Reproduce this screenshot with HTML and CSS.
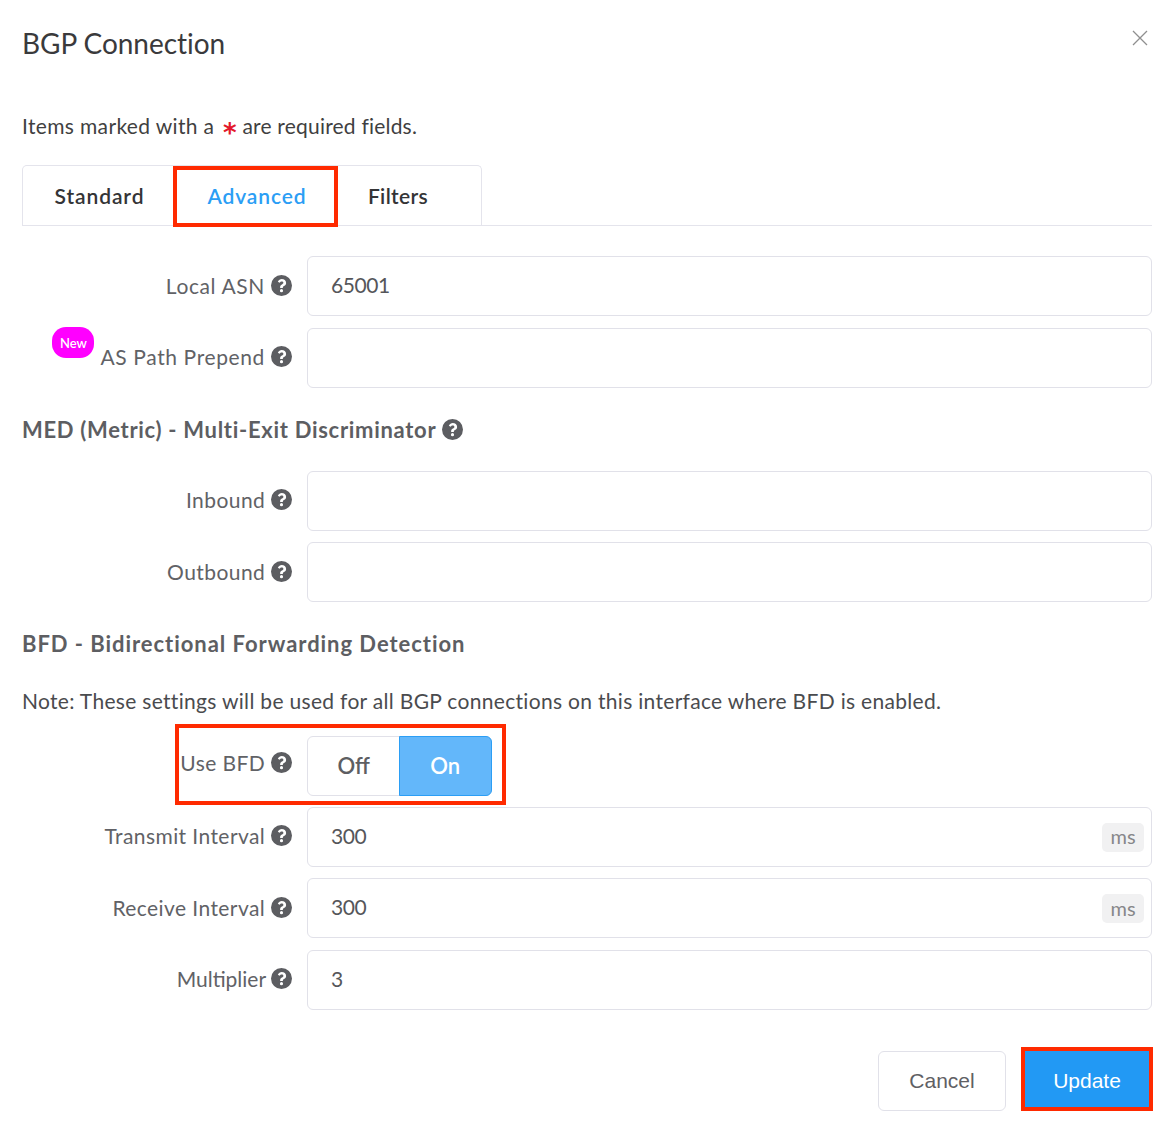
FILE: index.html
```html
<!DOCTYPE html>
<html lang="en">
<head>
<meta charset="utf-8">
<title>BGP Connection</title>
<link rel="stylesheet" href="styles.css">
</head>
<body>
<svg width="0" height="0" class="defs"><defs>
<symbol id="help" viewBox="0 0 20 20">
<path fill="currentColor" fill-rule="evenodd" d="M10 0a10 10 0 1 0 0 20a10 10 0 0 0 0-20zM10.2 3.9c2.3 0 4.2 1.5 4.2 3.6c0 1.6-.9 2.3-2 3c-.8.5-1.1.8-1.1 1.4v.4H8.7v-.6c0-1.4.7-2.1 1.7-2.7c.9-.5 1.4-.9 1.4-1.5c0-.8-.8-1.3-1.6-1.3c-.9 0-1.4.4-2 1.2L6.500 6.500c1-1.700 2.100-2.600 3.700-2.600zM10 13.400a1.500 1.500 0 1 1 0 3a1.500 1.500 0 0 1 0-3z"/>
</symbol></defs></svg>
<main class="dialog">
  <header class="head">
    <h1>BGP Connection</h1>
    <svg class="close" viewBox="0 0 16 16" width="16" height="16"><path d="M1 1l14 14M15 1L1 15" stroke="#8f8f8f" stroke-width="1.300" fill="none"/></svg>
  </header>
  <p class="req">Items marked with a <span class="star">*</span> <span class="tail">are required fields.</span></p>
  <div class="tabs-line">
    <nav class="tabs">
      <span class="tab">Standard</span>
      <span class="tab active">Advanced<i class="mark"></i></span>
      <span class="tab">Filters</span>
    </nav>
  </div>
  <div class="row first"><label class="wide">Local ASN <svg class="q"><use href="#help"/></svg></label><div class="input">65001</div></div>
  <div class="row"><label class="wide"><span class="new">New</span>AS Path Prepend <svg class="q"><use href="#help"/></svg></label><div class="input"></div></div>
  <h2 class="sect med">MED (Metric) - Multi-Exit Discriminator <svg class="q"><use href="#help"/></svg></h2>
  <div class="row"><label>Inbound <svg class="q"><use href="#help"/></svg></label><div class="input"></div></div>
  <div class="row"><label>Outbound <svg class="q"><use href="#help"/></svg></label><div class="input"></div></div>
  <h2 class="sect bfd">BFD - Bidirectional Forwarding Detection</h2>
  <p class="note">Note: These settings will be used for all BGP connections on this interface where BFD is enabled.</p>
  <div class="row use"><label class="uselabel">Use BFD <svg class="q"><use href="#help"/></svg></label>
    <div class="toggle"><span class="off">Off</span><span class="on">On</span></div><i class="mark usemark"></i></div>
  <div class="row"><label>Transmit Interval <svg class="q"><use href="#help"/></svg></label><div class="input">300<span class="unit">ms</span></div></div>
  <div class="row"><label>Receive Interval <svg class="q"><use href="#help"/></svg></label><div class="input">300<span class="unit">ms</span></div></div>
  <div class="row"><label class="tight">Multiplier <svg class="q"><use href="#help"/></svg></label><div class="input">3</div></div>
  <footer class="actions">
    <button class="btn cancel">Cancel</button>
    <button class="btn update">Update</button>
  </footer>
</main>
</body>
</html>
```
FILE: styles.css
```css
* { box-sizing: border-box; }
html, body { margin: 0; padding: 0; background: #fff; }
body { font-family: "Lato", "Noto Sans", sans-serif; color: #5f6064; height: 1126px; overflow: hidden; }
.defs { position: absolute; }
.dialog { padding: 0 22px; width: 1174px; }
.head { display: flex; justify-content: space-between; height: 99px; padding-top: 26px; }
h1 { margin: 0; font-size: 28px; line-height: 34px; font-weight: 400; color: #3a3a3c; letter-spacing: -.05px; }
.close { margin: 4px 4px 0 0; }
.req { margin: 0; height: 66px; padding-top: 14px; font-size: 21px; line-height: 26px; color: #3f3f41; letter-spacing: .35px; }
.star { color: #e3182c; font-size: 26px; line-height: 20px; font-weight: 700; vertical-align: -8px; font-family: "DejaVu Sans", sans-serif; letter-spacing: 0; margin-left: 3px; }
.tail { letter-spacing: .2px; }
.tabs-line { border-bottom: 1px solid #e4e4ec; height: 61px; }
.tabs { display: flex; width: 460px; height: 60px; border: 1px solid #e4e4ec; border-bottom: 0; border-radius: 5px 5px 0 0; }
.tab { position: relative; display: flex; align-items: center; justify-content: center; font-size: 21px; font-weight: 600; color: #343436; letter-spacing: .9px; }
.tab:nth-child(1) { width: 153px; }
.tab:nth-child(2) { width: 162px; }
.tab:nth-child(3) { width: 120px; letter-spacing: .35px; }
.tab.active { color: #2b9ef5; }
.mark { position: absolute; border: 4px solid #ff2a00; pointer-events: none; }
.tab .mark { left: -3px; right: 0; top: 0; bottom: -2px; }
.row { position: relative; display: flex; gap: 15px; height: 60px; margin-bottom: 11.500px; }
.row.first { margin-top: 30px; }
.row.use, .use ~ .row { margin-bottom: 11.400px; }
.row label { width: 270px; display: flex; align-items: center; justify-content: flex-end; white-space: pre; font-size: 21px; color: #616266; letter-spacing: .42px; padding-bottom: 2px; }
.row label.wide { letter-spacing: .62px; }
.row label.tight { letter-spacing: 0; }
.q { width: 21px; height: 21px; color: #5c5d61; flex: none; margin-left: 0; }
.input { position: relative; flex: 1; height: 60px; border: 1px solid #e1e1e9; border-radius: 6px; padding: 0 0 3px 23px; display: flex; align-items: center; font-size: 21px; color: #55565a; letter-spacing: -.4px; }
.new { align-self: flex-start; margin: -1px 6px 0 0; width: 42px; height: 31px; border-radius: 14px; background: #ff00ff; color: #fff; font-size: 13px; font-weight: 600; text-align: center; line-height: 32px; letter-spacing: 0; }
.sect { margin: 0; font-size: 22px; font-weight: 700; color: #5d5e62; line-height: 28px; letter-spacing: .7px; display: flex; align-items: center; white-space: pre; }
.sect.med { padding-bottom: 10px; height: 71.500px; }
.sect.bfd { padding-top: 16px; letter-spacing: .95px; }
.note { margin: 30px 0 22px; font-size: 21px; line-height: 26px; color: #4a4b4e; letter-spacing: .31px; }
.row .uselabel { padding-bottom: 6px; }
.toggle { display: flex; width: 185px; height: 60px; border: 1px solid #e1e1e9; border-radius: 6px; font-size: 22px; font-weight: 600; }
.toggle span { display: flex; align-items: center; justify-content: center; flex: 1; }
.off { color: #5d5e62; }
.on { background: #63b7fa; color: #fff; border: 1px solid #2b9ef5; border-radius: 0 6px 6px 0; margin: -1px; }
.usemark { left: 153px; top: -12px; width: 331px; height: 81px; }
.unit { position: absolute; right: 7px; top: 15px; width: 42px; height: 29px; border-radius: 5px; background: #f1f1f2; color: #87878a; font-size: 20px; display: flex; align-items: center; justify-content: center; letter-spacing: 0; padding-bottom: 2px; }
.actions { display: flex; justify-content: flex-end; gap: 15px; margin-top: 41px; }
.btn { font-family: "Liberation Sans", sans-serif; font-size: 21px; height: 60px; border-radius: 6px; padding: 0; }
.cancel { width: 128px; background: #fff; border: 1px solid #e1e1e9; color: #5f6064; }
.update { width: 132px; margin: -4px -1px 0 0; height: 64px; padding-top: 4px; background: #2299f4; color: #fff; border: 4px solid #ff2a00; border-radius: 0; }
```
